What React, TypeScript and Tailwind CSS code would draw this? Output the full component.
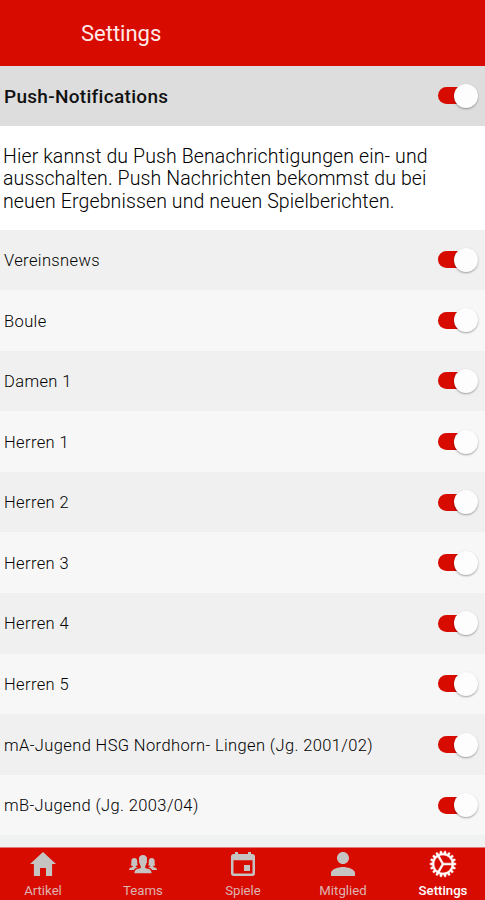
import type { ComponentType } from 'react';
import { IoIosCog, IoIosPeople, IoMdCalendar, IoMdHome, IoMdPerson } from 'react-icons/io';

const teams = [
  'Vereinsnews',
  'Boule',
  'Damen 1',
  'Herren 1',
  'Herren 2',
  'Herren 3',
  'Herren 4',
  'Herren 5',
  'mA-Jugend HSG Nordhorn- Lingen (Jg. 2001/02)',
  'mB-Jugend (Jg. 2003/04)',
];

const tabs: { label: string; icon: ComponentType<{ className?: string }>; active?: boolean }[] = [
  { label: 'Artikel', icon: IoMdHome },
  { label: 'Teams', icon: IoIosPeople },
  { label: 'Spiele', icon: IoMdCalendar },
  { label: 'Mitglied', icon: IoMdPerson },
  { label: 'Settings', icon: IoIosCog, active: true },
];

function Toggle() {
  return (
    <span className="flex h-[26px] w-10 shrink-0 items-center rounded-full">
      <span className="flex h-[17px] w-[36px] items-center justify-end rounded-full bg-[#d80b00]">
        <span className="-mr-1 size-6 shrink-0 rounded-full bg-[#fdfdfd] shadow-[0_1px_2px_rgba(0,0,0,0.35)]" />
      </span>
    </span>
  );
}

export default function App() {
  return (
    <div className="flex h-[900px] w-full flex-col overflow-hidden bg-[#eff2f1] font-[Roboto,sans-serif] text-[#2c2c2c]">
      <header className="flex h-[65.5px] shrink-0 items-center bg-[#d80b00] pt-[2px] pl-[81px]">
        <h1 className="text-[22px] leading-none text-[#ffe9e6]">Settings</h1>
      </header>
      <section className="flex h-[60px] shrink-0 items-center justify-between bg-[#dddddd] pr-[7px] pl-1">
        <h2 className="pt-[3px] text-[19px] font-medium tracking-[0.3px] text-[#111]">Push-Notifications</h2>
        <Toggle />
      </section>
      <p className="h-[104px] shrink-0 bg-white pt-[20px] pl-[3px] text-[19.5px] leading-[22.8px] font-light tracking-[0.12px] whitespace-nowrap text-black">
        Hier kannst du Push Benachrichtigungen ein- und
        <br />
        ausschalten. Push Nachrichten bekommst du bei
        <br />
        neuen Ergebnissen und neuen Spielberichten.
      </p>
      <ul className="shrink-0">
        {teams.map((team) => (
          <li key={team} className="flex h-[60.6px] items-center justify-between pr-[7px] pl-1 odd:bg-[#f0f0f0] even:bg-[#f7f7f7]">
            <span className="pt-[3px] text-[16.5px] font-light tracking-[0.38px] text-black">{team}</span>
            <Toggle />
          </li>
        ))}
      </ul>
      <nav className="mt-auto -ml-[7px] flex h-[53px] w-[500px] shrink-0 border-t border-[#e07c78] bg-[#d80b00]">
        {tabs.map(({ label, icon: Icon, active }) => (
          <div key={label} className="flex flex-1 flex-col items-center">
            <Icon className={`size-8 shrink-0 ${active ? 'stroke-white stroke-[10px] text-white' : 'text-[#c6c4c3]'}`} />
            <span className={`pt-[3px] text-[13.2px] leading-[16px] ${active ? 'font-medium text-white' : 'text-[#dcb4b1]'}`}>
              {label}
            </span>
          </div>
        ))}
      </nav>
    </div>
  );
}
